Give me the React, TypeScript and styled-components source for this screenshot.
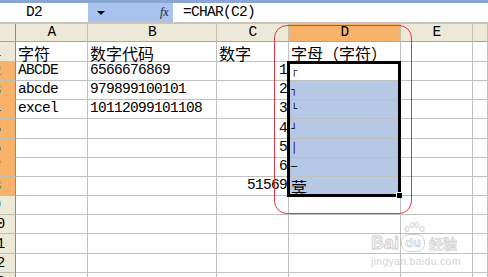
import React from "react";
import styled, { createGlobalStyle, css } from "styled-components";

const GlobalStyle = createGlobalStyle`
	html, body {
		margin: 0;
		padding: 0;
		background: #fff;
		overflow: hidden;
	}
	* {
		box-sizing: border-box;
	}
`;

const LATIN = `"Liberation Mono", "DejaVu Sans Mono", monospace`;
const CJK = `"Noto Sans CJK SC", "Noto Sans", sans-serif`;

type Row = {
	n: number;
	a?: string;
	b?: string;
	c?: string;
	d?: string;
	header?: boolean;
};

const rows: Row[] = [
	{ n: 1, a: "字符", b: "数字代码", c: "数字", d: "字母（字符）", header: true },
	{ n: 2, a: "ABCDE", b: "6566676869", c: "1", d: "┌" },
	{ n: 3, a: "abcde", b: "979899100101", c: "2", d: "┐" },
	{ n: 4, a: "excel", b: "10112099101108", c: "3", d: "└" },
	{ n: 5, c: "4", d: "┘" },
	{ n: 6, c: "5", d: "│" },
	{ n: 7, c: "6", d: "─" },
	{ n: 8, c: "51569", d: "蓂" },
	{ n: 9 },
	{ n: 10 },
	{ n: 11 },
	{ n: 12 },
	{ n: 13 },
];

const rowHeights = [20, 19, 19, 19, 20, 19, 19, 19, 19, 19, 20, 19, 19];
const selFrom = 2;
const selTo = 8;
const columns = ["A", "B", "C", "D", "E", ""];

const App = () => {
	return (
		<Page>
			<GlobalStyle />
			<FormulaBar>
				<NameBox>D2</NameBox>
				<DropButton>
					<Arrow />
				</DropButton>
				<FxLabel>fx</FxLabel>
				<FormulaInput>=CHAR(C2)</FormulaInput>
			</FormulaBar>
			<Divider />
			<Sheet $rows={rowHeights}>
				<Corner />
				{columns.map((col, i) => (
					<ColHeader key={i} $col={i + 2} $selected={col === "D"}>
						{col}
					</ColHeader>
				))}
				{rows.map((r) => {
					const inSel = r.n >= selFrom && r.n <= selTo;
					const line = r.n + 1;
					const boxChar = r.d && !r.header && r.d !== "蓂";
					return (
						<React.Fragment key={r.n}>
							<RowHeader $row={line} $selected={inSel}>
								{r.n}
							</RowHeader>
							<Cell $row={line} $col={2} $cjk={r.header}>
								{r.a}
							</Cell>
							<Cell $row={line} $col={3} $cjk={r.header}>
								{r.b}
							</Cell>
							<Cell $row={line} $col={4} $cjk={r.header} $number={!r.header}>
								{r.c}
							</Cell>
							<Cell
								$row={line}
								$col={5}
								$cjk={r.header || r.d === "蓂"}
								$fill={inSel && r.n !== selFrom}
							>
								{boxChar ? <BoxGlyph>{r.d}</BoxGlyph> : r.d}
							</Cell>
							<Cell $row={line} $col={6} />
							<Cell $row={line} $col={7} />
						</React.Fragment>
					);
				})}
				<Selection $from={selFrom + 1} $to={selTo + 2} />
			</Sheet>
			<Annotation />
			<Watermark>
				<Paw viewBox="0 0 26 14">
					<ellipse cx="6" cy="8" rx="2.2" ry="2.8" />
					<ellipse cx="11" cy="4" rx="2.2" ry="2.8" />
					<ellipse cx="16" cy="4" rx="2.2" ry="2.8" />
					<ellipse cx="21" cy="8" rx="2.2" ry="2.8" />
				</Paw>
				<MarkLine>
					<MarkLogo>Bai</MarkLogo>
					<MarkDu>du</MarkDu>
					<MarkCn>经验</MarkCn>
				</MarkLine>
				<MarkUrl>jingyan.baidu.com</MarkUrl>
			</Watermark>
		</Page>
	);
};

const Page = styled.div`
	position: relative;
	width: 488px;
	height: 277px;
	overflow: hidden;
	background: #fff;
`;

const FormulaBar = styled.div`
	display: flex;
	align-items: stretch;
	height: 22px;
	border-top: 3px solid #8aa4d4;
	background: #a8c3ee;
`;

const monoText = css`
	font-family: ${LATIN};
	font-size: 14.5px;
	letter-spacing: -0.7px;
	color: #000;
`;

const NameBox = styled.div`
	${monoText};
	width: 88px;
	background: #fff;
	padding-left: 26px;
	line-height: 19px;
`;

const DropButton = styled.div`
	width: 60px;
	display: flex;
	align-items: center;
	padding-left: 9px;
`;

const Arrow = styled.span`
	width: 0;
	height: 0;
	border-left: 4px solid transparent;
	border-right: 4px solid transparent;
	border-top: 4px solid #000;
`;

const FxLabel = styled.div`
	width: 25px;
	padding-left: 12px;
	font-family: "Liberation Serif", serif;
	font-style: italic;
	font-size: 12px;
	line-height: 19px;
	color: #222;
`;

const FormulaInput = styled.div`
	${monoText};
	flex: 1;
	background: #fff;
	padding-left: 10px;
	line-height: 19px;
`;

const Divider = styled.div`
	height: 2px;
	background: #c8c6bc;
`;

const Sheet = styled.div<{ $rows: number[] }>`
	display: grid;
	margin-left: -18px;
	grid-template-columns: 34px 72px 129px 72px 112px 72px 1fr;
	grid-template-rows: 18px ${({ $rows }) => $rows.map((h) => `${h}px`).join(" ")};
`;

const headerBase = css`
	${monoText};
	background: #ece9d8;
	border-right: 1px solid #c3c0ae;
	border-bottom: 1px solid #a9a795;
`;

const Corner = styled.div`
	${headerBase};
	grid-column: 1;
	grid-row: 1;
	border-right-color: #8f8d80;
`;

const ColHeader = styled.div<{ $col: number; $selected?: boolean }>`
	${headerBase};
	grid-column: ${({ $col }) => $col};
	grid-row: 1;
	display: flex;
	align-items: center;
	justify-content: center;
	line-height: 17px;
	background: ${({ $selected }) => ($selected ? "#f8b26a" : "#ece9d8")};
`;

const RowHeader = styled.div<{ $row: number; $selected?: boolean }>`
	${headerBase};
	grid-column: 1;
	grid-row: ${({ $row }) => $row};
	display: flex;
	align-items: center;
	justify-content: center;
	padding-right: 4px;
	border-right-color: #8f8d80;
	border-bottom-color: #c3c0ae;
	background: ${({ $selected }) => ($selected ? "#f8b26a" : "#ece9d8")};
`;

const Cell = styled.div<{
	$row: number;
	$col: number;
	$cjk?: boolean;
	$number?: boolean;
	$fill?: boolean;
}>`
	${monoText};
	grid-column: ${({ $col }) => $col};
	grid-row: ${({ $row }) => $row};
	display: flex;
	align-items: flex-end;
	justify-content: ${({ $number }) => ($number ? "flex-end" : "flex-start")};
	padding: 0 1px 2px 2px;
	border-right: 1px solid #c0c0c0;
	border-bottom: 1px solid #c0c0c0;
	background: ${({ $fill }) => ($fill ? "#b5c8e6" : "#fff")};
	white-space: nowrap;
	line-height: 16px;
	${({ $cjk }) =>
		$cjk &&
		css`
			font-family: ${CJK};
			font-size: 16px;
			letter-spacing: 0;
			padding-bottom: 0;
		`}
`;

const BoxGlyph = styled.span`
	font-family: "DejaVu Sans Mono", monospace;
	font-size: 10px;
	letter-spacing: 0;
	line-height: 12px;
	padding-bottom: 1px;
`;

const Selection = styled.div<{ $from: number; $to: number }>`
	grid-column: 5;
	grid-row: ${({ $from, $to }) => `${$from} / ${$to}`};
	margin: -1px 0 -1px -2px;
	border: 3px solid #000;
	position: relative;
	z-index: 2;
	pointer-events: none;

	&::after {
		content: "";
		position: absolute;
		right: -4px;
		bottom: -4px;
		width: 5px;
		height: 5px;
		background: #000;
		border-left: 1px solid #fff;
		border-top: 1px solid #fff;
	}
`;

const Annotation = styled.div`
	position: absolute;
	left: 274px;
	top: 25px;
	width: 138px;
	height: 189px;
	border: 1px solid #dc3a44;
	border-radius: 13px;
	z-index: 3;
	pointer-events: none;
`;

const Watermark = styled.div`
	position: absolute;
	left: 371px;
	top: 221px;
	display: flex;
	flex-direction: column;
	align-items: flex-start;
	color: #e6e6e6;
	z-index: 4;
`;

const Paw = styled.svg`
	width: 26px;
	height: 14px;
	margin-left: 30px;
	fill: #f4f4f4;
	stroke: #cfcfcf;
	stroke-width: 0.8;
`;

const MarkLine = styled.div`
	display: flex;
	align-items: center;
	gap: 2px;
	margin-top: -1px;
`;

const MarkLogo = styled.span`
	font-family: "Liberation Sans", sans-serif;
	font-weight: bold;
	font-size: 18px;
	line-height: 18px;
	color: #f6f6f6;
	-webkit-text-stroke: 0.8px #cdcdcd;
`;

const MarkDu = styled.span`
	font-family: "Liberation Sans", sans-serif;
	font-weight: bold;
	font-size: 13px;
	line-height: 16px;
	padding: 0 3px;
	border: 1px solid #d2d2d2;
	border-radius: 8px;
	color: #f6f6f6;
	-webkit-text-stroke: 0.6px #cdcdcd;
`;

const MarkCn = styled.span`
	font-family: ${CJK};
	font-weight: bold;
	font-size: 14px;
	line-height: 16px;
	margin-left: 2px;
	color: #f2f2f2;
	-webkit-text-stroke: 0.6px #cdcdcd;
`;

const MarkUrl = styled.span`
	font-family: "Liberation Sans", sans-serif;
	font-size: 10.5px;
	line-height: 12px;
	margin-top: 3px;
	color: #d4d4d4;
	letter-spacing: 0.3px;
`;

export default App;
